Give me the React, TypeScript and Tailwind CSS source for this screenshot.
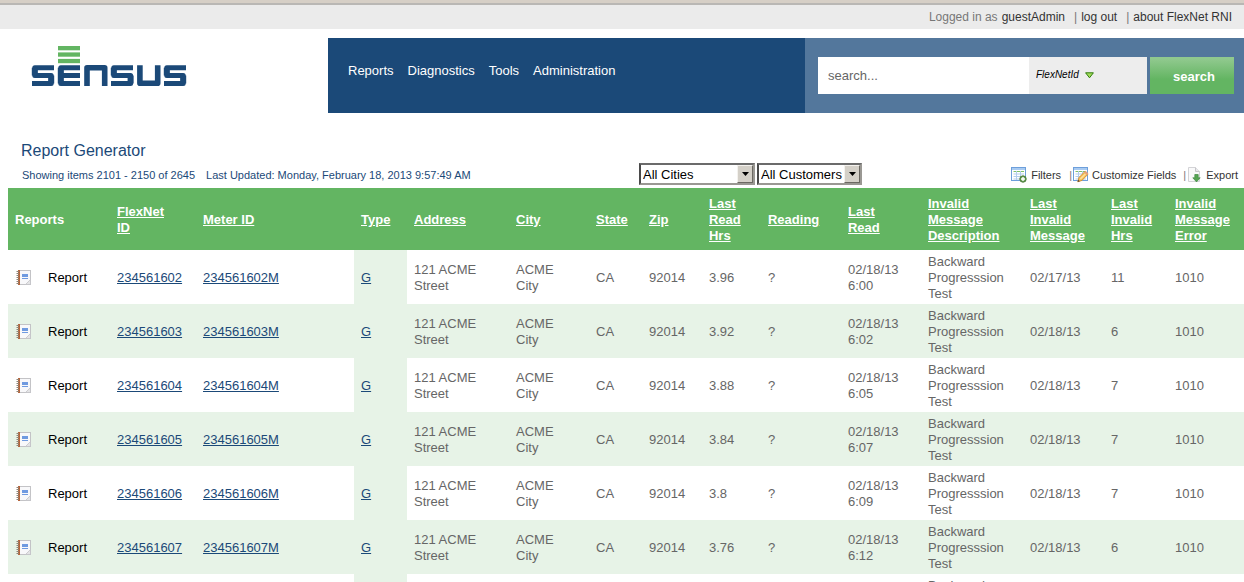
import React from "react";

type Column = { label: string; width: number; sortable: boolean };

const columns: Column[] = [
  { label: "Reports", width: 102, sortable: false },
  { label: "FlexNet\nID", width: 86, sortable: true },
  { label: "Meter ID", width: 158, sortable: true },
  { label: "Type", width: 53, sortable: true },
  { label: "Address", width: 102, sortable: true },
  { label: "City", width: 80, sortable: true },
  { label: "State", width: 53, sortable: true },
  { label: "Zip", width: 60, sortable: true },
  { label: "Last\nRead\nHrs", width: 59, sortable: true },
  { label: "Reading", width: 80, sortable: true },
  { label: "Last\nRead", width: 80, sortable: true },
  { label: "Invalid\nMessage\nDescription", width: 102, sortable: true },
  { label: "Last\nInvalid\nMessage", width: 81, sortable: true },
  { label: "Last\nInvalid\nHrs", width: 64, sortable: true },
  { label: "Invalid\nMessage\nError", width: 76, sortable: true },
];

const totalWidth = columns.reduce((sum, c) => sum + c.width, 0);

const meters = [
  { id: "234561602", hrs: "3.96", time: "6:00", invalid: "02/17/13", invalidHrs: "11" },
  { id: "234561603", hrs: "3.92", time: "6:02", invalid: "02/18/13", invalidHrs: "6" },
  { id: "234561604", hrs: "3.88", time: "6:05", invalid: "02/18/13", invalidHrs: "7" },
  { id: "234561605", hrs: "3.84", time: "6:07", invalid: "02/18/13", invalidHrs: "7" },
  { id: "234561606", hrs: "3.8", time: "6:09", invalid: "02/18/13", invalidHrs: "7" },
  { id: "234561607", hrs: "3.76", time: "6:12", invalid: "02/18/13", invalidHrs: "6" },
  { id: "234561608", hrs: "3.72", time: "6:14", invalid: "02/18/13", invalidHrs: "6" },
];

function Logo() {
  return (
    <svg width="156" height="42" viewBox="31 45 156 42" role="img" aria-label="Sensus">
      <g fill="#63b562">
        <rect x="58" y="46" width="22" height="4.3" />
        <rect x="58" y="52.4" width="22" height="4.3" />
        <rect x="58" y="58.9" width="22" height="4.3" />
      </g>
      <g fill="none" stroke="#1b4978" strokeWidth="5" strokeLinejoin="round">
        <path d="M54 67.7H34.8V75.6H51.2V83.5H32" />
        <path d="M80 67.7H60.8V83.5H80M60.8 75.6H80" />
        <path d="M87 86V67.7H104.7V86" strokeWidth="5.6" />
        <path d="M133 67.7H113.8V75.6H130.6V83.5H111" />
        <path d="M139.9 65.2V83.2H157.7V65.2" strokeWidth="5.6" />
        <path d="M186 67.7H166.8V75.6H183.2V83.5H164" />
      </g>
      <g fill="none" stroke="#1b4978" strokeWidth="6">
        <path d="M34.8 67.7V75.6M51.2 75.6V83.5M60.8 67.7V83.5M113.8 67.7V75.6M130.6 75.6V83.5M166.8 67.7V75.6M183.2 75.6V83.5" />
      </g>
    </svg>
  );
}

function ReportIcon() {
  return (
    <svg width="16" height="16" viewBox="0 0 16 16" aria-hidden="true" className="shrink-0">
      <rect x="3.5" y="0.5" width="12" height="14" fill="#f8f8fa" stroke="#c3c3c6" />
      <rect x="3" y="0" width="2" height="15" fill="#b5653c" />
      <path d="M1.5 1.5H4M1.5 3.5H4M1.5 5.5H4M1.5 7.5H4M1.5 9.5H4M1.5 11.5H4M1.5 13.5H4" stroke="#8f8578" />
      <rect x="7" y="4" width="6" height="3" fill="#6f9ae0" />
      <path d="M7 8.5H13" stroke="#6f9ae0" />
      <path d="M10.5 14.5L15.5 9.5V14.5Z" fill="#e4e4e6" stroke="#c3c3c6" strokeWidth="0.8" />
    </svg>
  );
}

function GridBase() {
  return (
    <>
      <rect x="0.5" y="0.5" width="14" height="13" fill="#fff" stroke="#6d9fdb" />
      <rect x="1" y="1" width="13" height="2" fill="#a9cbf2" />
      <path d="M2.5 4.5H13" stroke="#7fc169" />
      <path d="M2.5 7H13M2.5 9.5H13M2.5 12H13M5.5 4V13M9.5 4V13" stroke="#b3cdec" />
    </>
  );
}

function FiltersIcon() {
  return (
    <svg width="16" height="16" viewBox="0 0 16 16" aria-hidden="true">
      <GridBase />
      <circle cx="12" cy="12" r="3.2" fill="#6a9f56" stroke="#4d7d3d" />
      <path d="M10 12H14M12 10V14" stroke="#fff" strokeWidth="1.4" />
    </svg>
  );
}

function CustomizeIcon() {
  return (
    <svg width="16" height="16" viewBox="0 0 16 16" aria-hidden="true">
      <GridBase />
      <path d="M4.8 14.8L6 10.6L12 4.4L15 7.2L9 13.4Z" fill="#f7c35c" stroke="#d08a2c" strokeWidth="0.9" />
      <path d="M7.4 12L13.5 5.8" stroke="#fde6a8" strokeWidth="1.1" />
      <path d="M11 5.4L12.6 3.8L15.4 6.6L14 8.2Z" fill="#e3a07a" />
      <path d="M4.6 15L5.3 12.8L6.8 14.3Z" fill="#5b4632" />
    </svg>
  );
}

function ExportIcon() {
  return (
    <svg width="16" height="16" viewBox="0 0 16 16" aria-hidden="true">
      <path d="M1.5 0.5H8.5L12.5 4.5V14.5H1.5Z" fill="#f9f9fa" stroke="#d3d3d6" />
      <path d="M8.5 0.5V4.5H12.5" fill="#e9e9ec" stroke="#c6c6ca" />
      <path d="M7.8 7.5H11.2V10.8H13.2L9.5 14.9L5.8 10.8H7.8Z" fill="#55a352" stroke="#3f8a41" strokeWidth="0.7" />
    </svg>
  );
}

function FilterSelect({ label, options, widthClass }: { label: string; options: string[]; widthClass: string }) {
  return (
    <div className={`relative h-[22px] ${widthClass}`}>
      <select
        aria-label={label}
        className="h-full w-full appearance-none rounded-none border-2 border-t-[#6b6b6b] border-r-[#9a9893] border-b-[#9a9893] border-l-[#4a4a4a] bg-white pt-px pl-0.5 text-[13px] leading-4 text-black outline-none"
      >
        {options.map((o) => (
          <option key={o}>{o}</option>
        ))}
      </select>
      <span className="pointer-events-none absolute top-0.5 right-0.5 bottom-0.5 flex w-4 items-center justify-center border border-t-[#f4f2ee] border-r-[#6b6862] border-b-[#6b6862] border-l-[#f4f2ee] bg-[#d4d0c8]">
        <svg width="7" height="4" viewBox="0 0 7 4" aria-hidden="true">
          <path d="M0 0H7L3.5 4Z" fill="#000" />
        </svg>
      </span>
    </div>
  );
}

export default function App() {
  return (
    <div className="h-screen overflow-hidden bg-white font-['Liberation_Sans',Arial,sans-serif] text-[13px] leading-4 text-[#666]">
      <div className="h-[5px] border-b-2 border-[#b9b7b4] bg-[#d6cfc6]" />
      <div className="flex h-6 items-center justify-end bg-[#ebebeb] pr-3 text-xs text-[#777]">
        <span>Logged in as</span>
        <a href="#account" className="ml-1 text-[#333]">guestAdmin</a>
        <span className="ml-[9px]">|</span>
        <a href="#logout" className="ml-1 text-[#333]">log out</a>
        <span className="ml-[9px]">|</span>
        <a href="#about" className="ml-1 text-[#333]">about FlexNet RNI</a>
      </div>

      <header className="mt-[9px] flex h-[75px]">
        <div className="w-[328px] shrink-0 pt-[7px] pl-[31px]">
          <Logo />
        </div>
        <nav className="flex flex-1 gap-[14px] bg-[#1b4978] pt-[25px] pl-5 text-white">
          <a href="#reports">Reports</a>
          <a href="#diagnostics">Diagnostics</a>
          <a href="#tools">Tools</a>
          <a href="#administration">Administration</a>
        </nav>
        <form className="flex w-[439px] shrink-0 items-center bg-[#53779c] pr-[10px] pl-[13px]" onSubmit={(e) => e.preventDefault()}>
          <input
            type="text"
            aria-label="Search"
            placeholder="search..."
            className="h-[37px] min-w-0 flex-1 bg-white px-[10px] text-[13px] text-[#555] outline-none placeholder:text-[#666]"
          />
          <div className="relative h-[37px] w-[118px]">
            <select
              aria-label="Search field"
              className="h-full w-full appearance-none rounded-none bg-[#ededed] pb-0.5 pl-[7px] text-[10px] text-black italic outline-none"
            >
              <option>FlexNetId</option>
              <option>Meter ID</option>
            </select>
            <svg width="9" height="7" viewBox="0 0 9 7" aria-hidden="true" className="pointer-events-none absolute top-[15px] left-14">
              <path d="M0.6 0.8H8.4L4.5 5.8Z" fill="#a4dc5c" stroke="#2f7d0c" strokeWidth="1" />
            </svg>
          </div>
          <button
            type="submit"
            className="ml-[3px] h-[37px] w-[84px] bg-linear-to-b from-[#90c98e] from-5% to-[#63b562] to-60% pt-0.5 pl-1 text-[13px] font-bold text-white"
          >
            search
          </button>
        </form>
      </header>

      <main className="pt-7 pl-2">
        <h1 className="pt-px pl-[13px] text-base leading-[18px] text-[#1b4978]">Report Generator</h1>
        <div className="flex h-7 items-center text-[11px]">
          <div className="flex w-[631px] shrink-0 gap-[11px] pt-0.5 pl-[14px] text-[#1b4978]">
            <span>Showing items 2101 - 2150 of 2645</span>
            <span>Last Updated: Monday, February 18, 2013 9:57:49 AM</span>
          </div>
          <div className="flex gap-0.5">
            <FilterSelect label="City" options={["All Cities", "ACME City"]} widthClass="w-[116px]" />
            <FilterSelect label="Customer" options={["All Customers"]} widthClass="w-[105px]" />
          </div>
          <div className="ml-auto flex items-center pt-0.5 pr-[6px] text-[#333]">
            <button type="button" className="flex items-center gap-1">
              <FiltersIcon />
              Filters
            </button>
            <span className="ml-2 text-[#777]">|</span>
            <button type="button" className="ml-px flex items-center gap-[3px]">
              <CustomizeIcon />
              Customize Fields
            </button>
            <span className="ml-[7px] text-[#777]">|</span>
            <button type="button" className="ml-px flex items-center gap-[3px]">
              <ExportIcon />
              Export
            </button>
          </div>
        </div>

        <table className="w-full table-fixed border-collapse">
          <colgroup>
            {columns.map((c) => (
              <col key={c.label} style={{ width: `${(c.width / totalWidth) * 100}%` }} />
            ))}
          </colgroup>
          <thead>
            <tr className="h-[62px] bg-[#63b562] text-white">
              {columns.map((c) => (
                <th key={c.label} scope="col" className="pt-0.5 pl-[7px] text-left align-middle font-bold whitespace-pre">
                  {c.sortable ? (
                    <a href="#sort" className="underline">{c.label}</a>
                  ) : (
                    c.label
                  )}
                </th>
              ))}
            </tr>
          </thead>
          <tbody>
            {meters.map((m) => (
              <tr key={m.id} className="h-[54px] whitespace-pre even:bg-[#e7f3e7] [&>td]:pt-0.5 [&>td]:pl-[7px]">
                <td>
                  <a href="#report" className="flex items-center gap-[17px] text-black">
                    <ReportIcon />
                    Report
                  </a>
                </td>
                <td>
                  <a href="#flexnet" className="text-[#1b4978] underline">{m.id}</a>
                </td>
                <td>
                  <a href="#meter" className="text-[#1b4978] underline">{`${m.id}M`}</a>
                </td>
                <td className="bg-[#e7f3e7]">
                  <a href="#type" className="text-[#1b4978] underline">G</a>
                </td>
                <td>{"121 ACME\nStreet"}</td>
                <td>{"ACME\nCity"}</td>
                <td>CA</td>
                <td>92014</td>
                <td>{m.hrs}</td>
                <td>?</td>
                <td>{`02/18/13\n${m.time}`}</td>
                <td>{"Backward\nProgresssion\nTest"}</td>
                <td>{m.invalid}</td>
                <td>{m.invalidHrs}</td>
                <td>1010</td>
              </tr>
            ))}
          </tbody>
        </table>
      </main>
    </div>
  );
}
